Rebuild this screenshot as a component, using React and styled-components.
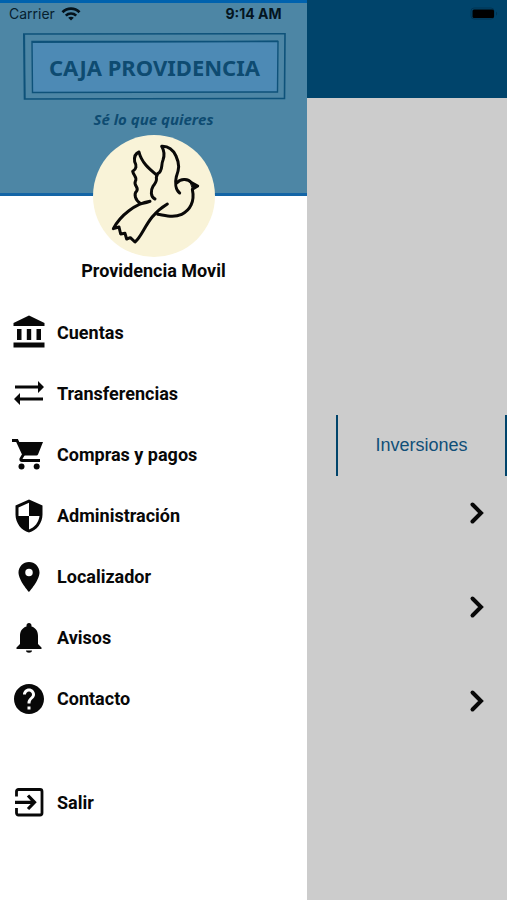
import React from "react";
import styled, { createGlobalStyle } from "styled-components";
import { MdSecurity, MdLocationOn, MdHelp } from "react-icons/md";

const GlobalStyle = createGlobalStyle`
  *, *::before, *::after { box-sizing: border-box; }
  body {
    margin: 0;
    background: #cccccc;
    color: #080808;
    font-family: Roboto, sans-serif;
  }
`;

const Screen = styled.div`
  position: relative;
  display: grid;
  grid-template-columns: minmax(307px, 60%) 1fr;
  min-height: 100vh;
  overflow: hidden;
`;

const StatusBar = styled.div`
  position: absolute;
  inset: 0 0 auto 0;
  z-index: 2;
  display: grid;
  grid-template-columns: 1fr auto 1fr;
  align-items: center;
  height: 27px;
  padding: 0 9px;
  font-family: Inter, sans-serif;
  font-size: 14px;
  color: #06202f;
`;

const Carrier = styled.span`
  display: flex;
  align-items: center;
  gap: 6px;
`;

const Clock = styled.time`
  font-weight: 700;
  color: #04151f;
`;

const Battery = styled.svg`
  justify-self: end;
  width: 28px;
  height: 14px;
`;

const Drawer = styled.aside`
  display: flex;
  flex-direction: column;
  background: #ffffff;
`;

const Banner = styled.header`
  display: flex;
  flex-direction: column;
  align-items: center;
  height: 196px;
  padding-top: 30px;
  background: #4d86a5;
  border-top: 3px solid #0062ae;
  border-bottom: 3px solid #1465a6;
  color: #0e4b71;
`;

const Plaque = styled.div`
  display: grid;
  place-items: center;
  width: 263px;
  height: 67px;
  margin-left: 2px;
`;

const PlaqueFrame = styled.svg`
  grid-area: 1 / 1;
  width: 263px;
  height: 67px;
`;

const Brand = styled.h1`
  grid-area: 1 / 1;
  margin: 0;
  font-family: "Noto Sans", sans-serif;
  font-size: 22px;
  font-weight: 700;
  line-height: 32px;
  white-space: nowrap;
`;

const Slogan = styled.p`
  margin: 8px 0 0;
  font-family: "Open Sans", sans-serif;
  font-size: 15px;
  font-style: italic;
  font-weight: 700;
  line-height: 22px;
  white-space: nowrap;
`;

const Profile = styled.section`
  display: flex;
  flex-direction: column;
  align-items: center;
  margin-top: -61px;
`;

const Avatar = styled.svg`
  width: 122px;
  height: 122px;
  border-radius: 50%;
  background: #f9f3d8;
`;

const ProfileName = styled.h2`
  margin: 0;
  font-size: 18px;
  font-weight: 700;
  line-height: 28px;
`;

const Menu = styled.nav`
  display: flex;
  flex-direction: column;
  margin-top: 17px;
`;

const MenuLink = styled.a`
  display: flex;
  align-items: center;
  gap: 10px;
  height: 61px;
  margin-top: ${({ $apart }) => ($apart ? "43px" : "0")};
  padding-left: 11px;
  color: inherit;
  font-size: 18px;
  font-weight: 700;
  text-decoration: none;

  svg {
    flex: none;
    width: 36px;
    height: 36px;
  }
`;

const Content = styled.main`
  display: flex;
  flex-direction: column;
  min-width: 0;
  background: #cccccc;
`;

const TopBar = styled.div`
  height: 98px;
  background: #00446b;
`;

const Tabs = styled.div`
  display: flex;
  margin: 317px 0 0 29px;
  border-right: 2px solid #00446b;
`;

const Tab = styled.button`
  flex: 1;
  height: 61px;
  padding: 0;
  border: 0;
  border-left: 2px solid #00446b;
  background: none;
  color: #104f78;
  font-family: "Liberation Sans", sans-serif;
  font-size: 18px;
`;

const Accounts = styled.div`
  display: flex;
  flex-direction: column;
  gap: 20px;
`;

const AccountRow = styled.button`
  display: flex;
  align-items: center;
  justify-content: flex-end;
  height: 74px;
  padding: 0 22px;
  border: 0;
  background: none;
  color: #080808;
`;

const WifiIcon = () => (
  <svg width="20" height="14" viewBox="0 0 20 14" fill="none" stroke="#04121b" aria-hidden="true">
    <path d="M1.5 5.2C6.2.5 13.8.5 18.5 5.2" strokeWidth="2.8" />
    <path d="M4.8 8.6C7.7 5.8 12.3 5.8 15.2 8.6" strokeWidth="2.7" />
    <path d="M10 13.6 7.2 10.8C8.7 9.4 11.3 9.4 12.8 10.8Z" fill="#04121b" stroke="none" />
  </svg>
);

const BatteryIcon = () => (
  <Battery viewBox="0 0 28 14" role="img" aria-label="Batería">
    <rect x="1" y="1" width="23" height="11" rx="3" fill="none" stroke="#003554" />
    <rect x="2.5" y="2.5" width="21.5" height="8.5" rx="1.5" fill="#000" />
    <path d="M26 4.5c1.5.8 1.5 3.4 0 4.2z" fill="#003554" />
  </Battery>
);

const Frame = () => (
  <PlaqueFrame viewBox="0 0 263 67" fill="none" stroke="#0e527a" aria-hidden="true">
    <path d="M9 8.5 255 8.5 254.5 59 9.5 59.5Z" fill="#4d8ab5" strokeWidth="1.4" />
    <path d="M.8 1 262 .8 261.5 65.5 1.5 66Z" strokeWidth="1.6" />
    <path d="M9 9.5 130 9 255 8.2M1.5 1 2 66" strokeWidth="1.2" />
  </PlaqueFrame>
);

const Dove = () => (
  <Avatar
    viewBox="-36 -9 366 366"
    fill="none"
    stroke="#0a0908"
    strokeWidth="9"
    strokeLinecap="round"
    strokeLinejoin="round"
    role="img"
    aria-label="Paloma"
  >
    <path d="M150 183C136 177 137 157 144 145C151 135 157 130 154 118L158 107C175 98 167 82 174 66C180 50 177 37 170 25C190 24 204 35 213 54C225 80 222 94 214 116C210 133 211 155 224 165" />
    <path d="M155 111C137 96 110 76 102 42C92 46 87 57 89 71C96 83 94 94 83 100C85 112 98 118 91 130C85 143 103 148 95 159C86 168 90 186 107 197C118 195 125 194 135 190C91 197 47 231 25 272L42 267L47 288L60 286L65 303L76 299L90 312C117 291 123 236 187 198" />
    <path d="M216 134C229 119 251 124 259 134L278 144L262 154C270 191 255 217 230 229C206 240 184 233 158 229" />
    <path d="M256 132L280 144L263 151Z" fill="#0a0908" strokeWidth="3" />
  </Avatar>
);

const BankIcon = () => (
  <svg viewBox="0 0 36 36" fill="currentColor" aria-hidden="true">
    <path d="M18 .5 33.5 8V11H2.5V8Z" />
    <path d="M6 14H10.5V25H6ZM15.8 14H20.2V25H15.8ZM25.5 14H30V25H25.5ZM2.5 27.5H33.5V32.5H2.5Z" />
  </svg>
);

const TransferIcon = () => (
  <svg viewBox="0 0 36 36" fill="currentColor" aria-hidden="true">
    <path d="M4 9.5H27V5L33 11 27 17V12.5H4ZM32 21.5H9V17L3 23 9 29V24.5H32Z" />
  </svg>
);

const CartIcon = () => (
  <svg viewBox="0 0 36 36" aria-hidden="true">
    <path d="M6 5H32L27 17.500Q26.500 18.500 25.500 18.500H12.500Z" fill="currentColor" />
    <path
      d="M1 3.500H6L12.500 17.500 9.800 22Q9.500 23.500 11 23.500H29"
      fill="none"
      stroke="currentColor"
      strokeWidth="2.8"
    />
    <circle cx="10.5" cy="29.5" r="3" fill="currentColor" />
    <circle cx="25.7" cy="29.5" r="3" fill="currentColor" />
  </svg>
);

const BellIcon = () => (
  <svg viewBox="0 0 36 36" fill="currentColor" aria-hidden="true">
    <path d="M18 3C19.5 3 20.5 4 20.5 5.5V6.5C25 7.8 27 11.5 27 16V24L30.5 27.5V29H5.5V27.5L9 24V16C9 11.5 11 7.8 15.5 6.5V5.5C15.5 4 16.5 3 18 3Z" />
    <path d="M15 30.5H21C21 33.5 15 33.5 15 30.5Z" />
  </svg>
);

const ExitIcon = () => (
  <svg viewBox="0 0 36 36" fill="none" stroke="currentColor" strokeWidth="2.8" aria-hidden="true">
    <path d="M5.5 11.5V6.500C5.5 5.300 6.300 4.500 7.500 4.500H29C30.200 4.500 31 5.300 31 6.500V28C31 29.200 30.200 30 29 30H7.500C6.300 30 5.500 29.200 5.500 28V23" />
    <path d="M4 17.300H23M17 10.500 23.500 17.300 17 24" strokeWidth="3.2" />
  </svg>
);

const ChevronIcon = () => (
  <svg width="16" height="24" viewBox="0 0 16 24" fill="none" stroke="currentColor" strokeWidth="4" strokeLinecap="round" aria-hidden="true">
    <path d="M3.5 3.5 12 12 3.5 20.5" />
  </svg>
);

const menuItems = [
  { label: "Cuentas", Icon: BankIcon },
  { label: "Transferencias", Icon: TransferIcon },
  { label: "Compras y pagos", Icon: CartIcon },
  { label: "Administración", Icon: MdSecurity },
  { label: "Localizador", Icon: MdLocationOn },
  { label: "Avisos", Icon: BellIcon },
  { label: "Contacto", Icon: MdHelp },
  { label: "Salir", Icon: ExitIcon, apart: true },
];

export default function App() {
  return (
    <>
      <GlobalStyle />
      <Screen>
        <StatusBar>
          <Carrier>
            Carrier
            <WifiIcon />
          </Carrier>
          <Clock>9:14 AM</Clock>
          <BatteryIcon />
        </StatusBar>
        <Drawer>
          <Banner>
            <Plaque>
              <Frame />
              <Brand>CAJA PROVIDENCIA</Brand>
            </Plaque>
            <Slogan>Sé lo que quieres</Slogan>
          </Banner>
          <Profile>
            <Dove />
            <ProfileName>Providencia Movil</ProfileName>
          </Profile>
          <Menu aria-label="Principal">
            {menuItems.map(({ label, Icon, apart }) => (
              <MenuLink key={label} href="#" $apart={apart}>
                <Icon />
                {label}
              </MenuLink>
            ))}
          </Menu>
        </Drawer>
        <Content>
          <TopBar />
          <Tabs>
            <Tab type="button">Inversiones</Tab>
          </Tabs>
          <Accounts>
            {[1, 2, 3].map((n) => (
              <AccountRow key={n} type="button" aria-label={`Abrir cuenta ${n}`}>
                <ChevronIcon />
              </AccountRow>
            ))}
          </Accounts>
        </Content>
      </Screen>
    </>
  );
}
